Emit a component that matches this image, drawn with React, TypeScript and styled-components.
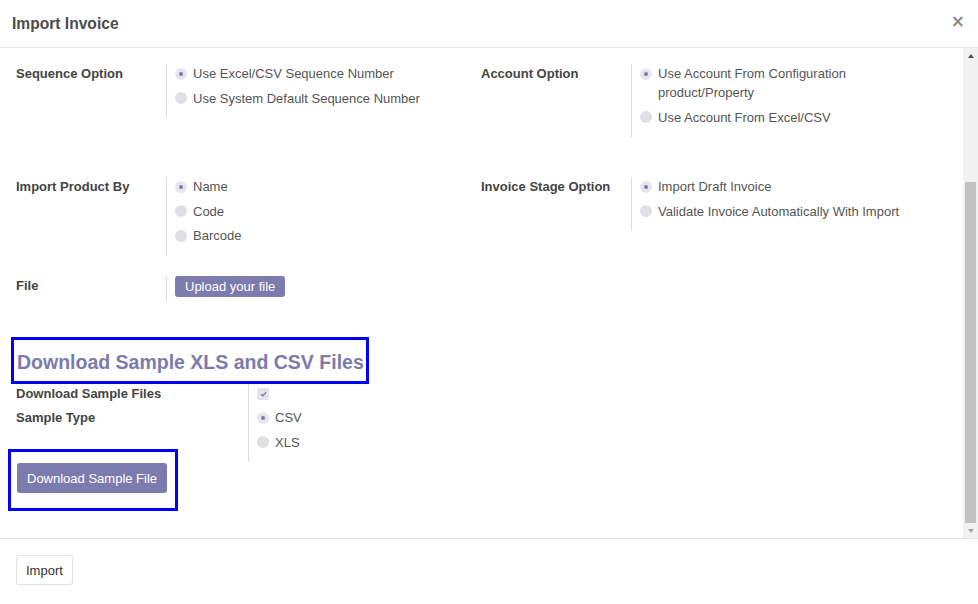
import React from 'react';
import styled, { createGlobalStyle } from 'styled-components';

const Global = createGlobalStyle`
  html, body { margin: 0; padding: 0; background: #fff; }
  body { font-family: "Liberation Sans", Arial, sans-serif; font-size: 13px; color: #4c4c4c; }
  * { box-sizing: border-box; }
`;

const Dialog = styled.div`
  width: 978px;
  height: 604px;
  display: flex;
  flex-direction: column;
  background: #fff;
`;

const Header = styled.header`
  height: 48px;
  flex: none;
  display: flex;
  align-items: center;
  justify-content: space-between;
  padding: 0 13px 0 12px;
  border-bottom: 1px solid #e5e5e5;
`;

const Title = styled.h4`
  margin: 0;
  font-size: 15.6px;
  font-weight: 700;
  color: #4c4c4c;
`;

const Close = styled.button`
  border: 0;
  background: none;
  padding: 0;
  margin-top: -5px;
  font-family: "DejaVu Sans", sans-serif;
  font-size: 17px;
  font-weight: 700;
  line-height: 1;
  color: #8a8a8a;
  cursor: pointer;
`;

const Body = styled.div`
  flex: 1;
  display: flex;
  min-height: 0;
`;

const Content = styled.div`
  flex: 1;
  padding: 16px 16px 0 16px;
  overflow: hidden;
`;

const Section = styled.div<{ $mb?: number }>`
  display: grid;
  grid-template-columns: 465px 1fr;
  align-items: start;
  margin-bottom: ${p => p.$mb ?? 0}px;
`;

const Field = styled.div<{ $labelWidth?: number }>`
  display: grid;
  grid-template-columns: ${p => p.$labelWidth ?? 150}px 1fr;
  align-items: stretch;
`;

const Label = styled.div`
  font-weight: 700;
  line-height: 19px;
  color: #444;
  padding-right: 8px;
`;

const Value = styled.div<{ $pb?: number }>`
  border-left: 1px solid #dcdcdc;
  padding: 0 16px ${p => p.$pb ?? 5}px 8px;
  display: flex;
  flex-direction: column;
  align-items: flex-start;
`;

const Option = styled.div`
  display: flex;
  align-items: flex-start;
  gap: 6px;
  min-height: 19px;
  line-height: 19px;
  margin-bottom: 5.5px;
  color: #555;
`;

const RadioDot = styled.span<{ $checked?: boolean }>`
  flex: none;
  width: 12px;
  height: 12px;
  margin-top: 3.5px;
  border-radius: 50%;
  background: ${p => (p.$checked ? '#e6e6ef' : '#dee0e6')};
  display: flex;
  align-items: center;
  justify-content: center;
  &::after {
    content: '';
    width: 4px;
    height: 4px;
    border-radius: 50%;
    background: ${p => (p.$checked ? '#7c7bad' : 'transparent')};
  }
`;

const CheckBox = styled.span`
  flex: none;
  width: 12px;
  height: 12px;
  margin-top: 4px;
  border-radius: 2px;
  background: #e4e4ee;
  display: flex;
  align-items: center;
  justify-content: center;
`;

const PrimaryButton = styled.button<{ $h?: number }>`
  height: ${p => p.$h ?? 30}px;
  padding: 0 10px;
  border: 0;
  border-radius: 3px;
  background: #7c7bad;
  color: #fff;
  font-family: inherit;
  font-size: 13px;
  cursor: pointer;
`;

const HeadingBox = styled.div`
  width: fit-content;
  border: 3px solid #0000f5;
  padding: 10px 2px 7px 3px;
  margin: 35px 0 0 -5px;
`;

const Heading = styled.h3`
  margin: 0;
  font-size: 19.5px;
  line-height: 24px;
  font-weight: 700;
  color: #7c7bad;
`;

const ButtonBox = styled.div`
  width: fit-content;
  border: 3px solid #0000f5;
  padding: 11px 8px 15px 6px;
  margin: -13px 0 0 -8px;
`;

const Scrollbar = styled.div`
  width: 15px;
  flex: none;
  background: #f1f1f1;
  display: flex;
  flex-direction: column;
`;

const Arrow = styled.div<{ $dir: 'up' | 'down' }>`
  height: 15px;
  flex: none;
  display: flex;
  align-items: center;
  justify-content: center;
  &::after {
    content: '';
    width: 0;
    height: 0;
    border-left: 3.5px solid transparent;
    border-right: 3.5px solid transparent;
    ${p =>
      p.$dir === 'up'
        ? 'border-bottom: 4px solid #505050;'
        : 'border-top: 4px solid #a3a3a3;'}
  }
`;

const Track = styled.div`
  flex: 1;
  display: flex;
  flex-direction: column;
  justify-content: flex-end;
`;

const Thumb = styled.div`
  height: 341px;
  margin: 0 2px;
  background: #c1c1c1;
`;

const Footer = styled.footer`
  height: 66px;
  flex: none;
  border-top: 1px solid #e5e5e5;
  padding: 16px;
  display: flex;
  align-items: flex-start;
`;

const SecondaryButton = styled.button`
  height: 30px;
  padding: 0 9px;
  border: 1px solid #dee2e6;
  border-radius: 3px;
  background: #fff;
  color: #333;
  font-family: inherit;
  font-size: 13px;
  cursor: pointer;
`;

type Opt = { text: string; checked?: boolean };

const RadioList: React.FC<{ options: Opt[] }> = ({ options }) => (
  <>
    {options.map(o => (
      <Option key={o.text}>
        <RadioDot $checked={o.checked} />
        <span>{o.text}</span>
      </Option>
    ))}
  </>
);

export default function App() {
  return (
    <>
      <Global />
      <Dialog>
        <Header>
          <Title>Import Invoice</Title>
          <Close aria-label="Close">×</Close>
        </Header>
        <Body>
          <Content>
            <Section $mb={40}>
              <Field>
                <Label>Sequence Option</Label>
                <Value>
                  <RadioList
                    options={[
                      { text: 'Use Excel/CSV Sequence Number', checked: true },
                      { text: 'Use System Default Sequence Number' },
                    ]}
                  />
                </Value>
              </Field>
              <Field>
                <Label>Account Option</Label>
                <Value>
                  <RadioList
                    options={[
                      { text: 'Use Account From Configuration product/Property', checked: true },
                      { text: 'Use Account From Excel/CSV' },
                    ]}
                  />
                </Value>
              </Field>
            </Section>
            <Section $mb={20}>
              <Field>
                <Label>Import Product By</Label>
                <Value>
                  <RadioList
                    options={[
                      { text: 'Name', checked: true },
                      { text: 'Code' },
                      { text: 'Barcode' },
                    ]}
                  />
                </Value>
              </Field>
              <Field>
                <Label>Invoice Stage Option</Label>
                <Value>
                  <RadioList
                    options={[
                      { text: 'Import Draft Invoice', checked: true },
                      { text: 'Validate Invoice Automatically With Import' },
                    ]}
                  />
                </Value>
              </Field>
            </Section>
            <Section>
              <Field>
                <Label>File</Label>
                <Value>
                  <PrimaryButton $h={21}>Upload your file</PrimaryButton>
                </Value>
              </Field>
            </Section>
            <HeadingBox>
              <Heading>Download Sample XLS and CSV Files</Heading>
            </HeadingBox>
            <Field $labelWidth={232}>
              <Label>Download Sample Files</Label>
              <Value $pb={0}>
                <Option>
                  <CheckBox>
                    <svg width="7" height="6" viewBox="0 0 7 6">
                      <path d="M1 3.2 L2.8 4.8 L6 1.2" fill="none" stroke="#7c7bad" strokeWidth="1.3" />
                    </svg>
                  </CheckBox>
                </Option>
              </Value>
              <Label>Sample Type</Label>
              <Value>
                <RadioList options={[{ text: 'CSV', checked: true }, { text: 'XLS' }]} />
              </Value>
            </Field>
            <ButtonBox>
              <PrimaryButton>Download Sample File</PrimaryButton>
            </ButtonBox>
          </Content>
          <Scrollbar>
            <Arrow $dir="up" />
            <Track>
              <Thumb />
            </Track>
            <Arrow $dir="down" />
          </Scrollbar>
        </Body>
        <Footer>
          <SecondaryButton>Import</SecondaryButton>
        </Footer>
      </Dialog>
    </>
  );
}
